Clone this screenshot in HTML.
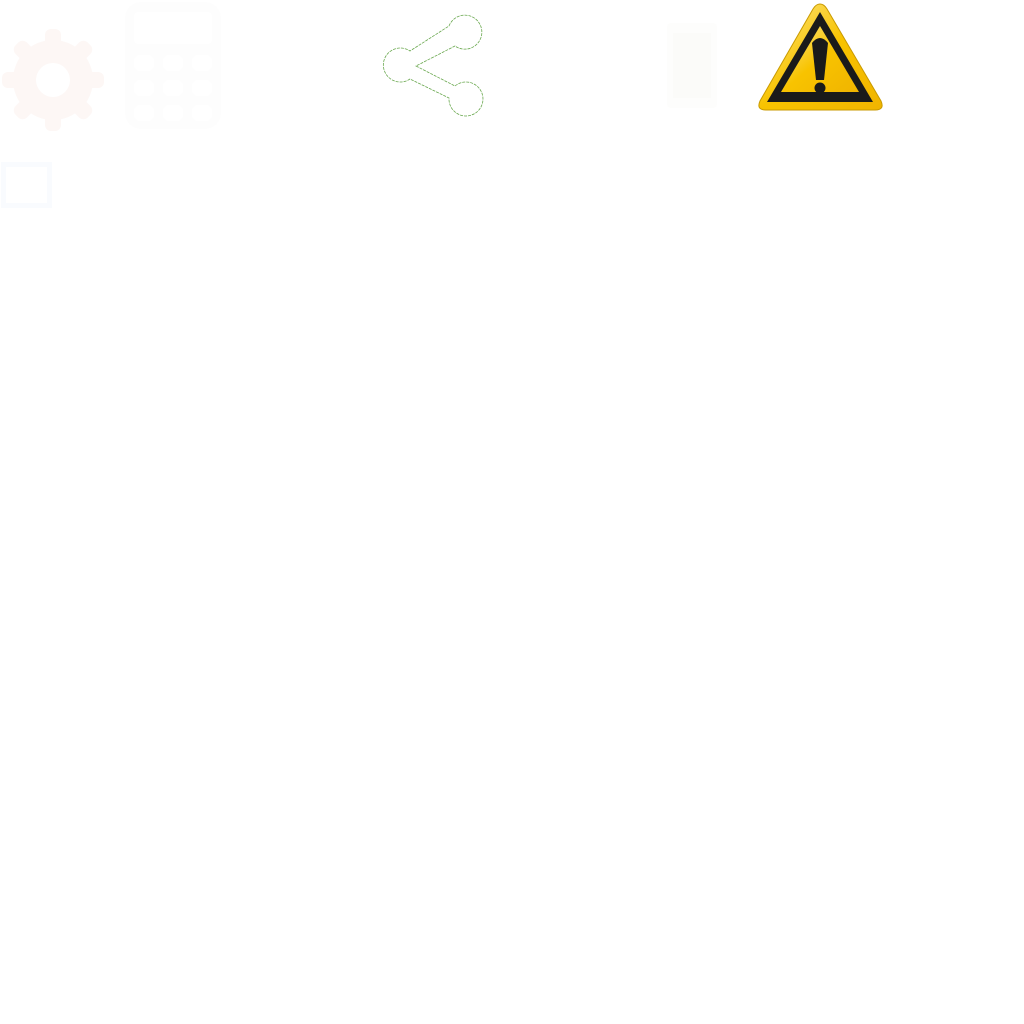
<!DOCTYPE html>
<html><head><style>
html,body{margin:0;padding:0;background:#fff;width:1024px;height:1024px;overflow:hidden}
svg{position:absolute;left:0;top:0}
</style></head><body>
<svg width="1024" height="1024" viewBox="0 0 1024 1024">
<defs>
<linearGradient id="y" x1="0" y1="0" x2="1" y2="1">
<stop offset="0" stop-color="#fde88a"/><stop offset="0.5" stop-color="#f8c300"/><stop offset="1" stop-color="#f0b400"/>
</linearGradient>
</defs>
<!-- gear -->
<g fill="#fdf7f5">
<circle cx="53" cy="80" r="40"/>
<g>
<rect x="45" y="29" width="16" height="102" rx="6"/>
<rect x="45" y="29" width="16" height="102" rx="6" transform="rotate(45 53 80)"/>
<rect x="45" y="29" width="16" height="102" rx="6" transform="rotate(90 53 80)"/>
<rect x="45" y="29" width="16" height="102" rx="6" transform="rotate(135 53 80)"/>
</g>
</g>
<circle cx="53" cy="80" r="17" fill="#fff"/>
<!-- calculator -->
<rect x="125" y="2" width="96" height="127" rx="16" fill="#fdfdfd"/>
<rect x="134" y="12" width="78" height="32" rx="4" fill="#fff"/>
<g fill="#fff">
<rect x="134" y="55" width="20" height="16" rx="6"/><rect x="163" y="55" width="20" height="16" rx="6"/><rect x="192" y="55" width="20" height="16" rx="6"/>
<rect x="134" y="80" width="20" height="16" rx="6"/><rect x="163" y="80" width="20" height="16" rx="6"/><rect x="192" y="80" width="20" height="16" rx="6"/>
<rect x="134" y="105" width="20" height="16" rx="6"/><rect x="163" y="105" width="20" height="16" rx="6"/><rect x="192" y="105" width="20" height="16" rx="6"/>
</g>
<!-- small box -->
<rect x="1" y="162" width="51" height="46" fill="#f9fbfe"/>
<rect x="6" y="167" width="41" height="36" fill="#fff"/>
<!-- share -->
<g fill="none" stroke="#6aa84f" stroke-width="0.8" stroke-dasharray="3 1">
<path d="M449 26 A17 17 0 1 1 455 46 L416 66 L455 86 A17 17 0 1 1 449 98 L410 79 A17 17 0 1 1 410 51 Z"/>
</g>
<!-- phone -->
<rect x="667" y="23" width="50" height="85" rx="4" fill="#fdfdfc"/>
<rect x="673" y="33" width="38" height="65" fill="#fbfbf9"/>
<!-- warning -->
<path d="M820 4 Q824 4 827 9 L881 101 Q885 110 875 110 L766 110 Q756 110 760 101 L813 9 Q816 4 820 4 Z" fill="url(#y)" stroke="#c99a00" stroke-width="1"/>
<path d="M820 12 L873 102 L767 102 Z" fill="#1a1a1a"/>
<path d="M820 26 L859 92 L781 92 Z" fill="url(#y)"/>
<path d="M812 43 Q820 33 828 43 L824 80 L816 80 Z" fill="#1a1a1a"/>
<circle cx="820" cy="88" r="5.5" fill="#1a1a1a"/>
</svg>
</body></html>
